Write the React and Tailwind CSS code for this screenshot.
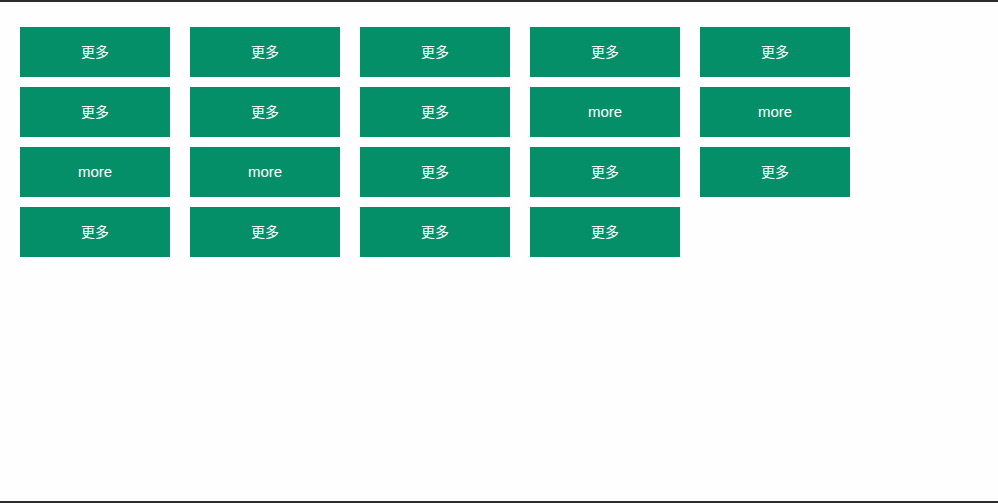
const labels = [
  '更多', '更多', '更多', '更多', '更多',
  '更多', '更多', '更多', 'more', 'more',
  'more', 'more', '更多', '更多', '更多',
  '更多', '更多', '更多', '更多',
]

export default function App() {
  return (
    <div className="h-[503px] border-t-2 border-b-2 border-[#2b2b2b] bg-[#fefefe] pt-[25px] pl-5 font-['Liberation_Sans','Noto_Sans_CJK_SC',sans-serif]">
      <div className="grid w-[850px] grid-cols-[repeat(5,150px)] gap-x-5 gap-y-2.5">
        {labels.map((label, i) => (
          <button
            key={i}
            className={`flex h-[50px] w-[150px] items-center justify-center bg-[#048f68] text-white ${label === 'more' ? 'text-[15px]' : 'text-sm'}`}
          >
            {label}
          </button>
        ))}
      </div>
    </div>
  )
}
